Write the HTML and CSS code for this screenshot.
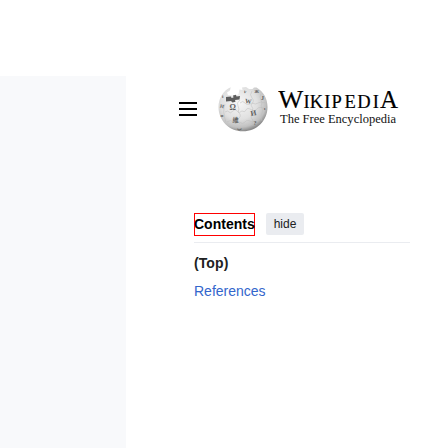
FILE: index.html
```html
<!DOCTYPE html>
<html lang="en">
<head>
<meta charset="utf-8">
<title>Wikipedia</title>
<link rel="stylesheet" href="styles.css">
</head>
<body>
<div class="page">
  <aside class="margin"></aside>
  <main class="content">
    <header class="header">
      <div class="menu"><span></span><span></span><span></span></div>
      <svg class="globe" viewBox="0 0 50 46" width="50" height="46">
        <defs>
          <radialGradient id="ball" cx=".42" cy=".36" r=".64">
            <stop offset="0" stop-color="#f7f7f7"/>
            <stop offset=".58" stop-color="#e0e0e0"/>
            <stop offset=".86" stop-color="#c0c0c0"/>
            <stop offset="1" stop-color="#8b8b8b"/>
          </radialGradient>
        </defs>
        <path fill="url(#ball)" d="M12.700 1.200C5 4.500 .5 12.500 .5 21C.5 34.500 11 45.300 25 45.300C39 45.300 49.500 34.500 49.500 21C49.500 12.500 45.500 5.500 38.500 1.500L36 1.500L34.500 3L31 3L28 1L24 1.500L24.500 4L21.500 3.500L20.500 8L18.500 9.500L14 9.500L10 9L9 6.500L12 4.500Z"/>
        <path fill="#5c5c5c" d="M8 11L13 10.500L13.500 12L15.500 11.500L15 9.500L18 8.700L18.500 10.500L22 10L21.500 13.500L17 14L17.500 15.800L14.500 16.500L13 15L8 15.500Z"/>
        <g fill="none" stroke="#bdbdbd" stroke-width=".5">
          <path d="M7 18Q4 25 8 36M7 26q3-2 4 0t4-1q2-3 4 0t5 0q3 2 4-1t6 0q3 2 5-1t9 0M9 36q4-3 6 0t6 0q4 3 6 0t7 0q3 1 8-2M22 14q-4 3-2 6t0 6q4 3 1 6t1 6M34 5q-3 4 0 7t-1 7q3 3 1 8t1 7q-2 4 0 6M43 8q-2 3 0 6t0 6q3 4 1 7t0 8M22 17q3-3 5 0t7 0q4 2 6 0t8 0"/>
        </g>
        <g class="glyphs">
          <text x="11.500" y="24.300" font-size="8">Ω</text>
          <text x="27" y="17.500" font-size="6.500" transform="rotate(8 30 15)">W</text>
          <text x="32.500" y="29.500" font-size="7.500" transform="rotate(-10 35 27)">И</text>
          <text class="cjk" x="14.500" y="35.500" font-size="6">維</text>
          <text x="2" y="22" font-size="5" transform="rotate(12 4 20)">И</text>
          <text x="4" y="12" font-size="5">i</text>
          <text x="2.500" y="31" font-size="5">и</text>
          <text x="43" y="14" font-size="6">J</text>
          <text x="35.500" y="38.500" font-size="6">?</text>
          <text x="26" y="7.500" font-size="5" transform="rotate(20 28 6)">ν</text>
          <text x="36.500" y="6.500" font-size="6">ж</text>
          <text x="46" y="23.500" font-size="5">ı</text>
          <text x="19" y="43.500" font-size="5">ب</text>
        </g>
      </svg>
      <svg class="wordmark" viewBox="0 0 122 40" width="122" height="40">
        <g class="title">
          <text x="0.200" y="22" font-size="26" textLength="25" lengthAdjust="spacingAndGlyphs">W</text>
          <text x="25.500 31.700 46.200 53.500 66.500 79.200 94.700" y="22" font-size="18.500">IKIPEDI</text>
          <text x="102" y="22" font-size="26" textLength="18" lengthAdjust="spacingAndGlyphs">A</text>
        </g>
        <text class="tagline" x="2" y="37" textLength="116" lengthAdjust="spacingAndGlyphs">The Free Encyclopedia</text>
      </svg>
    </header>
    <nav class="toc">
      <div class="toc-head"><h2>Contents</h2><button>hide</button></div>
      <div class="top">(Top)</div>
      <a>References</a>
    </nav>
  </main>
</div>
</body>
</html>
```
FILE: styles.css
```css
* { box-sizing: border-box; }
body { margin: 0; background: #fff; font-family: "Liberation Sans", Arial, sans-serif; color: #202122; }
.page { display: flex; width: 448px; height: 448px; overflow: hidden; }
.margin { width: 126px; margin-top: 76px; background: #f8f9fb; }
.content { flex: 1; padding-top: 86px; }
.header { display: flex; align-items: flex-start; height: 127px; padding-left: 53px; }
.menu { display: flex; flex-direction: column; gap: 4px; width: 18px; margin-top: 16px; }
.menu span { height: 2px; background: #000; }
.globe { margin-left: 21px; }
.glyphs { fill: #606060; font-family: "Liberation Serif", serif; font-weight: bold; }
.cjk { font-family: "Noto Sans CJK TC", sans-serif; }
.wordmark { margin-left: 10px; }
.title { font-family: "Liberation Serif", serif; fill: #000; stroke: #000; stroke-width: .2px; }
.tagline { font-family: "Liberation Serif", serif; font-size: 12.5px; fill: #111; }
.toc { width: 216px; margin-left: 68px; font-size: 14px; line-height: 18px; }
.toc-head { display: flex; align-items: flex-start; gap: 11px; height: 30px; border-bottom: 1px solid #eaecf0; }
h2 { width: 61px; height: 23px; margin: 0; border: 1px solid #f00; color: #000; font-size: 14px; line-height: 21px; text-indent: -1px; white-space: nowrap; }
button { width: 38px; height: 22px; padding: 0; border: 0; border-radius: 2px; background: #eaecf0; color: #202122; font: 12px/22px "Liberation Sans", Arial, sans-serif; }
.top { margin-top: 11px; font-weight: bold; letter-spacing: .1px; }
.toc a { display: block; margin-top: 10px; color: #3366cc; }
```
